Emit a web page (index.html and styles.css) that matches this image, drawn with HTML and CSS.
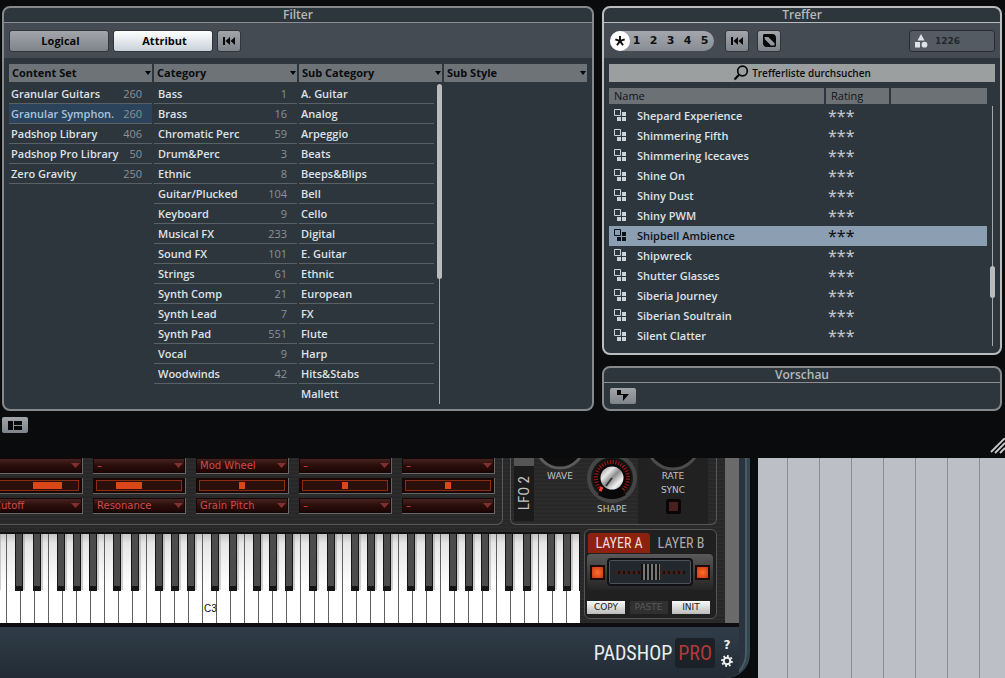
FILE: index.html
```
<!DOCTYPE html>
<html lang="de">
<head>
<meta charset="utf-8">
<title>Padshop Pro – MediaBay</title>
<meta name="viewport" content="width=device-width, initial-scale=1">
<link rel="stylesheet" href="styles.css">
</head>
<body>
<svg class="defs" aria-hidden="true">
  <symbol id="preset" viewBox="0 0 13 13"><path d="M.5.5h6v6h-6z" fill="none" stroke="currentColor"/><path d="M8 3h4v4H8zM8 8h4v4H8zM3 8h4v4H3z" fill="currentColor"/></symbol>
  <symbol id="rewind" viewBox="0 0 14 10"><path d="M1 1h2v8H1zM8 1v8L3.500 5zM13 1v8L8.500 5z" fill="currentColor"/></symbol>
</svg>

<section class="browser">
  <div class="panels">
    <section class="panel filter">
      <h2 class="panel-title">Filter</h2>
      <div class="toolbar">
        <button class="btn wide">Logical</button>
        <button class="btn wide on">Attribut</button>
        <button class="btn square" aria-label="Filter zurücksetzen"><svg width="14" height="10"><use href="#rewind"/></svg></button>
      </div>
      <div class="columns">
        <div class="column">
          <select class="col-head" aria-label="Attribut 1"><option>Content Set</option></select>
          <ul class="list">
            <li><span>Granular Guitars</span><i>260</i></li>
            <li class="picked"><span>Granular Symphon.</span><i>260</i></li>
            <li><span>Padshop Library</span><i>406</i></li>
            <li><span>Padshop Pro Library</span><i>50</i></li>
            <li><span>Zero Gravity</span><i>250</i></li>
          </ul>
        </div>
        <div class="column second">
          <select class="col-head" aria-label="Attribut 2"><option>Category</option></select>
          <ul class="list">
            <li><span>Bass</span><i>1</i></li>
            <li><span>Brass</span><i>16</i></li>
            <li><span>Chromatic Perc</span><i>59</i></li>
            <li><span>Drum&amp;Perc</span><i>3</i></li>
            <li><span>Ethnic</span><i>8</i></li>
            <li><span>Guitar/Plucked</span><i>104</i></li>
            <li><span>Keyboard</span><i>9</i></li>
            <li><span>Musical FX</span><i>233</i></li>
            <li><span>Sound FX</span><i>101</i></li>
            <li><span>Strings</span><i>61</i></li>
            <li><span>Synth Comp</span><i>21</i></li>
            <li><span>Synth Lead</span><i>7</i></li>
            <li><span>Synth Pad</span><i>551</i></li>
            <li><span>Vocal</span><i>9</i></li>
            <li><span>Woodwinds</span><i>42</i></li>
          </ul>
        </div>
        <div class="column">
          <select class="col-head" aria-label="Attribut 3"><option>Sub Category</option></select>
          <div class="scroller">
            <ul class="list">
              <li>A. Guitar</li>
              <li>Analog</li>
              <li>Arpeggio</li>
              <li>Beats</li>
              <li>Beeps&amp;Blips</li>
              <li>Bell</li>
              <li>Cello</li>
              <li>Digital</li>
              <li>E. Guitar</li>
              <li>Ethnic</li>
              <li>European</li>
              <li>FX</li>
              <li>Flute</li>
              <li>Harp</li>
              <li>Hits&amp;Stabs</li>
              <li class="last">Mallett</li>
            </ul>
            <div class="track"><div class="thumb tall"></div></div>
          </div>
        </div>
        <div class="column">
          <select class="col-head" aria-label="Attribut 4"><option>Sub Style</option></select>
        </div>
      </div>
    </section>

    <div class="side">
      <section class="panel hits">
        <h2 class="panel-title">Treffer</h2>
        <div class="toolbar">
          <div class="rating" role="group" aria-label="Bewertung">
            <button class="any" aria-label="Alle"><svg width="12" height="12" viewBox="0 0 12 12"><path d="M6 1v5M1.300 4.400L6 6l4.700-1.600M3 10.300L6 6l3 4.300" fill="none" stroke="currentColor" stroke-width="2"/></svg></button>
            <button>1</button><button>2</button><button>3</button><button>4</button><button>5</button>
          </div>
          <button class="btn square" aria-label="Zurücksetzen"><svg width="14" height="10"><use href="#rewind"/></svg></button>
          <button class="btn square shuffle" aria-label="Zufällig"><svg width="15" height="15" viewBox="0 0 15 15"><path d="M1 2l1-1h8q4 0 4 4v8l-1 1H5q-4 0-4-4z" fill="currentColor"/><path d="M2.500 4h4l6 6v2.500h-4L3 7z" fill="#959aa1"/><path d="M6 3.500h6v6zM9 12.500H3v-6z" fill="currentColor"/></svg></button>
          <div class="count"><svg width="14" height="14" viewBox="0 0 14 14" fill="#dfe3e8"><path d="M7 0l3.500 6.500h-7zM1 8h5v5.500H1z"/><circle cx="10.500" cy="10.700" r="2.900"/></svg><span>1226</span></div>
        </div>
        <div class="hits-body">
          <button class="search"><svg width="16" height="16" viewBox="0 0 16 16" fill="none" stroke="#050505"><circle cx="9.500" cy="6" r="4.800" stroke-width="1.700"/><path d="M6 9.800L1.500 14.500" stroke-width="2.200"/></svg>Trefferliste durchsuchen</button>
          <div class="results">
            <table>
              <colgroup><col><col class="c-rating"><col class="c-blank"></colgroup>
              <thead><tr><th>Name</th><th>Rating</th><th></th></tr></thead>
              <tbody>
                <tr><td><svg class="pi"><use href="#preset"/></svg>Shepard Experience</td><td class="stars">***</td><td></td></tr>
                <tr><td><svg class="pi"><use href="#preset"/></svg>Shimmering Fifth</td><td class="stars">***</td><td></td></tr>
                <tr><td><svg class="pi"><use href="#preset"/></svg>Shimmering Icecaves</td><td class="stars">***</td><td></td></tr>
                <tr><td><svg class="pi"><use href="#preset"/></svg>Shine On</td><td class="stars">***</td><td></td></tr>
                <tr><td><svg class="pi"><use href="#preset"/></svg>Shiny Dust</td><td class="stars">***</td><td></td></tr>
                <tr><td><svg class="pi"><use href="#preset"/></svg>Shiny PWM</td><td class="stars">***</td><td></td></tr>
                <tr class="current"><td><svg class="pi"><use href="#preset"/></svg>Shipbell Ambience</td><td class="stars">***</td><td></td></tr>
                <tr><td><svg class="pi"><use href="#preset"/></svg>Shipwreck</td><td class="stars">***</td><td></td></tr>
                <tr><td><svg class="pi"><use href="#preset"/></svg>Shutter Glasses</td><td class="stars">***</td><td></td></tr>
                <tr><td><svg class="pi"><use href="#preset"/></svg>Siberia Journey</td><td class="stars">***</td><td></td></tr>
                <tr><td><svg class="pi"><use href="#preset"/></svg>Siberian Soultrain</td><td class="stars">***</td><td></td></tr>
                <tr><td><svg class="pi"><use href="#preset"/></svg>Silent Clatter</td><td class="stars">***</td><td></td></tr>
              </tbody>
            </table>
            <div class="track"><div class="thumb short"></div></div>
          </div>
        </div>
      </section>
      <section class="panel preview">
        <h2 class="panel-title">Vorschau</h2>
        <div class="preview-body"><button class="btn small" aria-label="Vorschau"><svg width="14" height="12" viewBox="0 0 14 12"><path d="M1 0h4v4h8L7 11V5H1z" fill="currentColor"/></svg></button></div>
      </section>
    </div>
  </div>
  <footer class="browser-foot">
    <button class="btn small" aria-label="Layout"><svg width="14" height="9" viewBox="0 0 14 9" fill="currentColor"><path d="M0 0h5v9H0zM6 0h8v4H6zM6 5h8v4H6z"/></svg></button>
    <svg class="grip" width="15" height="16" viewBox="0 0 15 16"><path d="M1 14L15 0M5 15L15 5M10 15l5-5" stroke="#c8cbca" stroke-width="1.800"/></svg>
  </footer>
</section>

<section class="workspace">
  <div class="plugin">
    <div class="metal">
      <div class="upper">
        <div class="matrix">
          <select class="slot" aria-label="Modulator 1"><option></option></select>
          <select class="slot" aria-label="Modulator 2"><option>–</option></select>
          <select class="slot" aria-label="Modulator 3"><option>Mod Wheel</option></select>
          <select class="slot" aria-label="Modulator 4"><option>–</option></select>
          <select class="slot" aria-label="Modulator 5"><option>–</option></select>
          <div class="slot amount long"><input type="range" value="71" aria-label="Tiefe 1"></div>
          <div class="slot amount mid"><input type="range" value="33" aria-label="Tiefe 2"></div>
          <div class="slot amount"><input type="range" value="50" aria-label="Tiefe 3"></div>
          <div class="slot amount"><input type="range" value="50" aria-label="Tiefe 4"></div>
          <div class="slot amount"><input type="range" value="50" aria-label="Tiefe 5"></div>
          <select class="slot" aria-label="Ziel 1"><option>Cutoff</option></select>
          <select class="slot" aria-label="Ziel 2"><option>Resonance</option></select>
          <select class="slot" aria-label="Ziel 3"><option>Grain Pitch</option></select>
          <select class="slot" aria-label="Ziel 4"><option>–</option></select>
          <select class="slot" aria-label="Ziel 5"><option>–</option></select>
        </div>
        <div class="lfo">
          <div class="lfo-name"><span>LFO 2</span></div>
          <div class="knob-cell">
            <svg width="52" height="13" viewBox="0 0 52 13"><circle cx="26" cy="-14" r="24" fill="#0d0d0d" stroke="#5b5b5b" stroke-width="3"/></svg>
            <span>WAVE</span>
          </div>
          <div class="knob-cell shape">
            <svg width="54" height="46" viewBox="0 0 54 46">
              <defs><radialGradient id="dish"><stop offset=".75" stop-color="#080808"/><stop offset="1" stop-color="#2a2a2a"/></radialGradient>
              <linearGradient id="steel" x1="0" y1="0" x2="1" y2="1"><stop offset="0" stop-color="#8a8a8a"/><stop offset=".3" stop-color="#e8e8e8"/><stop offset=".5" stop-color="#8c8c8c"/><stop offset=".75" stop-color="#f4f4f4"/><stop offset="1" stop-color="#777"/></linearGradient></defs>
              <circle cx="27" cy="20" r="23" fill="url(#dish)" stroke="#454545" stroke-width="4"/>
              <circle cx="27" cy="20" r="16" fill="none" stroke="#8e1616" stroke-width="4" pathLength="360" stroke-dasharray="5 5" stroke-dashoffset="-2"/>
              <path d="M27 20L13 37q14 8 28 0z" fill="#080808"/>
              <circle cx="27" cy="20" r="11.500" fill="url(#steel)"/>
              <path d="M27 20l-6 8" stroke="#333" stroke-width="1.800"/><path d="M17 29l-2 4" stroke="#ff4038" stroke-width="3"/>
            </svg>
            <span>SHAPE</span>
          </div>
          <div class="knob-cell rate">
            <svg width="56" height="13" viewBox="0 0 56 13"><circle cx="28" cy="-15" r="26" fill="#0d0d0d" stroke="#4b4b4b" stroke-width="3"/></svg>
            <span>RATE</span>
            <label for="sync">SYNC</label>
            <input id="sync" type="checkbox" class="led-off">
          </div>
        </div>
      </div>
      <div class="lower">
        <svg class="keys" height="91" role="img" aria-label="Klaviatur">
          <defs>
            <linearGradient id="ivory" x1="0" y1="0" x2="0" y2="1"><stop offset="0" stop-color="#bdbdbd"/><stop offset=".12" stop-color="#e6e6e6"/><stop offset=".6" stop-color="#fff"/></linearGradient>
            <pattern id="whites" x="202" width="14" height="92" patternUnits="userSpaceOnUse"><rect width="14" height="92" fill="url(#ivory)"/><rect width="1" height="92" fill="#606060"/></pattern>
            <pattern id="blacks" x="202" width="98" height="92" patternUnits="userSpaceOnUse">
              <g id="bk"><rect x="11" y="2" width="8" height="56" fill="#999" opacity=".45"/><rect x="9" y="1" width="8" height="58" fill="#151515"/><rect x="10" y="1" width="6" height="53" fill="#4c4c4c"/></g>
              <use href="#bk" x="18"/><use href="#bk" x="42"/><use href="#bk" x="58"/><use href="#bk" x="74"/>
            </pattern>
          </defs>
          <rect width="100%" height="92" fill="url(#whites)"/>
          <rect width="100%" height="92" fill="url(#blacks)"/>
          <rect width="100%" height="2" fill="#111"/>
          <text x="204" y="80" class="key-name">C3</text>
        </svg>
        <div class="layers">
          <div class="tabs"><button class="active">LAYER A</button><button>LAYER B</button></div>
          <div class="fader">
            <button class="lamp" aria-label="Layer A an"></button>
            <input type="range" value="50" aria-label="Mix">
            <button class="lamp" aria-label="Layer B an"></button>
          </div>
          <div class="actions"><button>COPY</button><button disabled>PASTE</button><button>INIT</button></div>
        </div>
      </div>
    </div>
    <div class="brand">
      <div class="logo"><span>PADSHOP</span><b>PRO</b></div>
      <div class="tools">
        <button aria-label="Hilfe">?</button>
        <button aria-label="Einstellungen"><svg width="12" height="12" viewBox="0 0 12 12" fill="none" stroke="#f0f0f0"><circle cx="6" cy="6" r="3.300" stroke-width="2"/><circle cx="6" cy="6" r="5" stroke-width="1.800" pathLength="16" stroke-dasharray="1 1"/></svg></button>
      </div>
    </div>
  </div>
  <div class="timeline"></div>
</section>
</body>
</html>
```
FILE: styles.css
```
* { box-sizing: border-box; }
body {
  margin: 0;
  min-height: 100vh;
  display: flex;
  flex-direction: column;
  background: #090b0d;
  color: #dce2e6;
  font: 600 11px/20px "Open Sans", "Noto Sans", sans-serif;
  overflow-x: hidden;
}
button, select, input { font: inherit; color: inherit; margin: 0; padding: 0; border: 0; border-radius: 0; }
select, input { appearance: none; outline: 0; }
ul { list-style: none; margin: 0; padding: 0; }
svg { display: block; flex: none; }
.defs { position: absolute; width: 0; height: 0; }

/* media browser */
.browser { padding: 6px 0 0 2px; background: #090b0d; }
.panels { display: grid; grid-template-columns: 592fr 400fr; gap: 8px; padding-right: 3px; }
.side { display: flex; flex-direction: column; gap: 11px; }
.panel { border: 2px solid #85898c; border-radius: 8px; background: #2e363d; overflow: hidden; }
.hits { border-color: #b9bdbf; }
.panel-title { margin: 0; font-size: 12px; font-weight: 600; line-height: 14px; height: 15px; text-align: center; color: #b4b9bb; border-bottom: 1px solid #8b8f92; }
.hits .panel-title { border-color: #b9bdbf; }
.toolbar { display: flex; align-items: center; gap: 4px; height: 35px; padding: 0 5px; background: #444b52; }
.btn { display: flex; align-items: center; justify-content: center; height: 22px; border: 1px solid #30363c; border-radius: 3px; background: linear-gradient(#a2a5aa, #7f848b); color: #080808; }
.btn.wide { width: 100px; font-weight: 700; padding-left: 3px; }
.btn.on { background: linear-gradient(#fff, #c9d1d9); }
.btn.square { width: 24px; }
.btn.small { width: 26px; height: 16px; border: 0; border-radius: 2px; }

.columns { display: grid; grid-template-columns: repeat(4, 1fr); gap: 2px; padding: 6px 5px 5px; }
.column { min-width: 0; }
.col-head {
  display: block; width: 100%; height: 18px; margin-bottom: 2px; padding: 0 3px; line-height: 18px; font-weight: 700; color: #0a0c0e;
  background: #6e7378 url("data:image/svg+xml,%3Csvg xmlns='http://www.w3.org/2000/svg' width='6' height='4'%3E%3Cpath d='M0 0h6L3 4z' fill='%23050505'/%3E%3C/svg%3E") no-repeat right 1px center;
}
.list li { display: flex; justify-content: space-between; height: 20px; padding: 0 10px 0 2px; border-bottom: 1px solid #596066; white-space: nowrap; }
.second .list li { padding-left: 4px; }
.list i { font-style: normal; font-weight: 400; color: #8b9298; }
.list .picked { background: #2b435b; color: #a9c3dc; }
.list .last { border: 0; }
.scroller { display: grid; grid-template-columns: 1fr 8px; }
.track { display: flex; justify-content: center; background: linear-gradient(#a4a8ab, #a4a8ab) center / 1px 100% no-repeat; }
.thumb { width: 5px; border-radius: 3px; background: #b9bbbc; }
.tall { height: 61%; }
.short { height: 32px; margin-top: 160px; }
.scroller .track { margin-left: 3px; }

.rating { display: flex; align-items: center; height: 20px; margin: 0 7px 0 1px; padding-right: 1px; border-radius: 10px; background: linear-gradient(#a4a7ad, #888d95); }
.rating button { width: 17px; height: 20px; background: none; color: #111; font: bold 11px/20px "DejaVu Sans", sans-serif; }
.rating .any { display: flex; align-items: center; justify-content: center; width: 20px; margin-right: -2px; border-radius: 50%; background: #fff; }
.shuffle { margin-left: 4px; }
.count { display: flex; align-items: center; gap: 7px; width: 86px; height: 22px; margin-left: auto; padding-left: 4px; border: 1px solid #262c32; border-radius: 3px; background: #555b62; color: #23282d; font: bold 9px "DejaVu Sans", sans-serif; }
.hits-body { padding: 6px 5px 7px; }
.search { display: flex; align-items: center; justify-content: center; gap: 3px; width: 100%; height: 18px; margin-bottom: 6px; background: #9b9fa0; color: #0a0c0d; font-size: 10px; line-height: 18px; }
.results { display: grid; grid-template-columns: 1fr 8px; }
.results .track { margin: 18px -1px 0 2px; }
table { width: 100%; border-collapse: separate; border-spacing: 0; table-layout: fixed; }
.c-rating { width: 65px; }
.c-blank { width: 98px; }
th { height: 18px; padding: 0 5px; line-height: 16px; font-weight: 400; text-align: left; color: #111417; background: #6c7176; border-bottom: 2px solid #2e363d; }
th + th { border-left: 2px solid #2e363d; }
td { height: 20px; padding: 0; white-space: nowrap; }
.pi { display: inline-block; width: 13px; height: 13px; margin: 0 10px 0 5px; vertical-align: -2px; color: #ccd4da; }
td.stars { padding-left: 4px; font: 400 16px/20px "Noto Sans", sans-serif; color: #c1c7cc; vertical-align: top; }
.current { background: #8c9eb2; color: #0c1116; }
.current .pi, .current td.stars { color: #0c1116; }
.preview { flex: 1; }
.preview-body { padding: 5px 6px; }
.browser-foot { display: flex; justify-content: space-between; height: 47px; padding: 6px 0 4px; }
.grip { align-self: flex-end; }

/* instrument and arrangement behind the browser */
.workspace { flex: 1; display: grid; grid-template-columns: 758fr 247fr; min-height: 220px; }
.plugin { display: flex; flex-direction: column; min-width: 0; margin-right: 8px; padding-right: 8px; border-radius: 0 0 24px 0; background: #29343f; border-right: 3px solid #34464f; overflow: hidden; box-shadow: inset -2px -1px #4a5963; }
.metal { border-right: 14px solid #6a6a6a; padding-right: 8px; background: repeating-linear-gradient(#2a2a2a 0 1px, #2d2d2d 1px 2px, #282828 2px 4px); }
.upper { display: flex; gap: 7px; height: 74px; }
.matrix { flex: 1; display: grid; grid-template-columns: repeat(5, 93px); grid-auto-rows: 16px; gap: 4px 10px; height: 67px; margin-left: -10px; border: solid #55585a; border-width: 0 1px 1px 0; border-radius: 0 0 6px 0; }
.slot { height: 16px; padding: 0 4px; border: solid #666; border-width: 0 1px 1px 0; color: #d04a48; font: 10px/15px "DejaVu Sans", sans-serif;
  background: url("data:image/svg+xml,%3Csvg xmlns='http://www.w3.org/2000/svg' width='9' height='5'%3E%3Cpath d='M0 0h9L4.500 5z' fill='%23813030'/%3E%3C/svg%3E") no-repeat right 2px center, linear-gradient(#492724, #2a0d0a 50%, #1a0504); box-shadow: inset 0 0 0 1px #170606; }
.amount { padding: 2px 3px; background: #1c0705; }
.amount input { display: block; width: 100%; height: 11px; border: 1px solid #8d2d14; background: #2a0f0b; }
.amount input::-webkit-slider-thumb { appearance: none; width: 6px; height: 7px; background: #dc4719; }
.long input::-webkit-slider-thumb { width: 29px; }
.mid input::-webkit-slider-thumb { width: 26px; }
.lfo { display: flex; height: 67px; width: 207px; padding: 0 8px 0 3px; border: solid #55585a; border-width: 0 1px 1px; border-radius: 0 0 6px 6px; color: #c3c3c3; font: 9px/11px "DejaVu Sans", sans-serif; }
.lfo-name { display: flex; align-items: center; justify-content: center; width: 20px; margin-bottom: 3px; padding-top: 8px; background: linear-gradient(#555 8px, #1b1b1b 8px); }
.lfo-name span { writing-mode: vertical-rl; transform: rotate(180deg); font: 15px/20px "Roboto Condensed", Roboto, sans-serif; }
.knob-cell { display: flex; flex-direction: column; align-items: center; width: 52px; }
.knob-cell.rate { flex: 1; background: #212121; gap: 3px; }
.rate svg { margin-bottom: -3px; }
.led-off { width: 15px; height: 15px; border: 3px solid #0c0505; border-radius: 2px; background: #482020; }
.lower { display: flex; gap: 4px; }
.keys { flex: 1; min-width: 0; width: 0; height: 91px; }
.key-name { font: 10px "Liberation Sans", sans-serif; fill: #111; }
.layers { display: flex; flex-direction: column; width: 133px; height: 90px; margin-top: -3px; padding: 3px 3px 4px 2px; border: 1px solid #555; border-radius: 6px; background: #202020; }
.tabs { display: flex; padding-left: 1px; }
.tabs button { width: 62px; height: 20px; background: none; color: #aaa; font: 14px/20px "Roboto Condensed", Roboto, sans-serif; white-space: nowrap; }
.tabs .active { background: #8d2110; color: #f0dcd4; border-radius: 3px 3px 0 0; }
.fader { display: flex; align-items: center; justify-content: space-between; height: 36px; margin-top: 1px; padding: 0 3px; border-radius: 4px; background: linear-gradient(#595959, #242424); }
.lamp { width: 15px; height: 15px; border: 2px solid #1d0b07; background: radial-gradient(#ff6c2c, #c43a10); }
.fader input { width: 86px; height: 28px; padding: 0 4px; border: 2px solid #101114; border-radius: 4px; background: repeating-linear-gradient(90deg, #4a1c16 0 3px, #111 3px 5px) center / 70px 3px no-repeat, #23282c; box-shadow: inset 0 0 0 1px #4d5358; }
.fader input::-webkit-slider-thumb { appearance: none; width: 19px; height: 16px; background: repeating-linear-gradient(90deg, #111 0 2px, #777 2px 4px); }
.actions { display: flex; justify-content: space-between; margin-top: auto; padding: 0 3px 0 0; }
.actions button { width: 38px; height: 13px; background: linear-gradient(#fafafa, #bcbcbc); color: #222; font: 9px/13px "DejaVu Sans", sans-serif; }
.actions button:disabled { background: #303030; color: #595959; }
.brand { flex: 1; display: flex; align-items: center; justify-content: flex-end; gap: 5px; min-height: 52px; padding-right: 5px; border-top: 4px solid #0b0d10; background: linear-gradient(#303d48, #222b35); }
.logo { display: flex; align-items: center; gap: 3px; color: #e9edf0; font: 20px/30px "Roboto Condensed", Roboto, sans-serif; }
.logo b { padding: 0 3px; font-weight: 400; background: #1c2027; color: #b03a38; border-radius: 3px; }
.tools { display: flex; flex-direction: column; align-items: center; gap: 2px; }
.tools button { width: 14px; height: 14px; padding: 1px; background: none; color: #f0f0f0; font: bold 12px/12px "DejaVu Sans", sans-serif; }
.timeline { background: linear-gradient(90deg, #8b8f95 1px, #bcc0c6 1px) 29px 0 / 32px 100%; }
```
